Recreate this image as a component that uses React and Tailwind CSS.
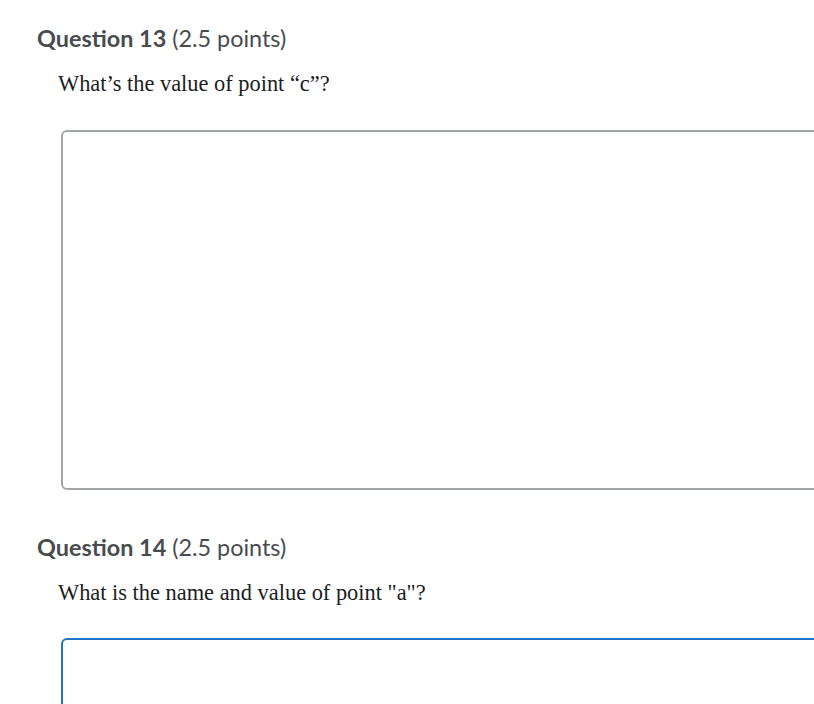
import React from "react";

function Question({ number, points, prompt, active }) {
  return (
    <section className="flex flex-col">
      <h2 className="pl-[37px] text-[23.4px] leading-[28px] text-[#494c4e] font-['Lato',sans-serif]">
        <span className="font-bold">Question {number}</span>{" "}
        <span className="font-normal">({points} points)</span>
      </h2>
      <p className="pl-[58px] mt-[19px] text-[22.4px] leading-[26px] text-[#1c1d1e] font-['Liberation_Serif',serif]">
        {prompt}
      </p>
      <div
        className={
          active
            ? "ml-[61px] mt-[32px] w-[800px] h-[360px] shrink-0 rounded-[6px] border-2 border-[#1f74c6] bg-white"
            : "ml-[61px] mt-[33px] w-[800px] h-[360px] shrink-0 rounded-[6px] border-2 border-[#a3a6a8] bg-white"
        }
      />
    </section>
  );
}

export default function App() {
  return (
    <div className="w-[814px] h-[704px] overflow-hidden bg-white pt-[24px]">
      <div className="flex flex-col gap-[43px]">
        <Question number={13} points="2.5" prompt="What’s the value of point “c”?" />
        <Question number={14} points="2.5" prompt={'What is the name and value of point "a"?'} active />
      </div>
    </div>
  );
}
